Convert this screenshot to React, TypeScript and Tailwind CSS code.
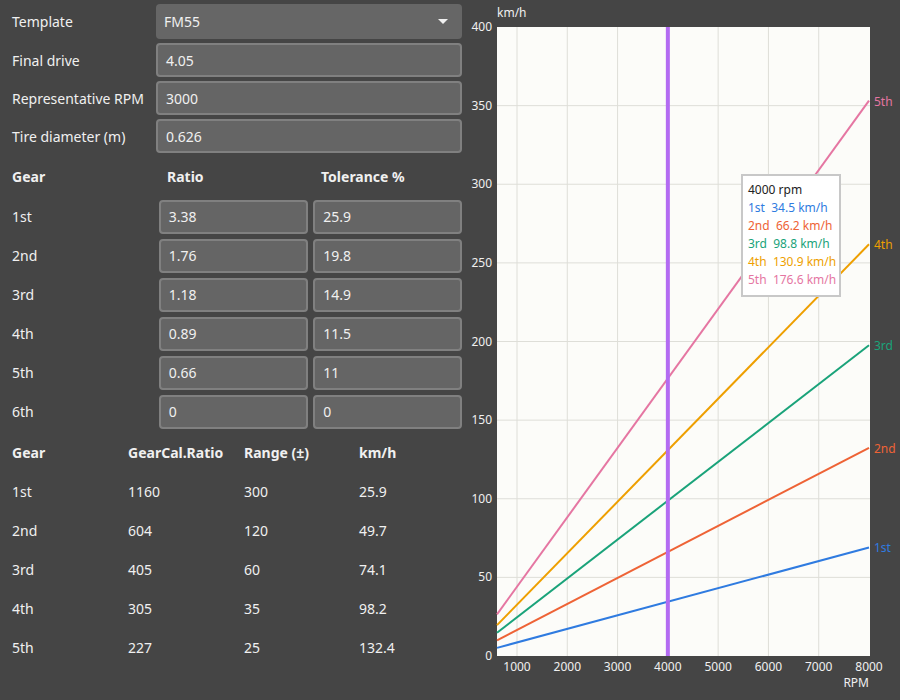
import React from "react";

const gears = [
  ["1st", "3.38", "25.9"],
  ["2nd", "1.76", "19.8"],
  ["3rd", "1.18", "14.9"],
  ["4th", "0.89", "11.5"],
  ["5th", "0.66", "11"],
  ["6th", "0", "0"],
];
const table = [
  ["1st", "1160", "300", "25.9"],
  ["2nd", "604", "120", "49.7"],
  ["3rd", "405", "60", "74.1"],
  ["4th", "305", "35", "98.2"],
  ["5th", "227", "25", "132.4"],
];
const lines = [
  { n: "1st", c: "#2f7be0", v: 34.5 },
  { n: "2nd", c: "#ee6336", v: 66.2 },
  { n: "3rd", c: "#1aa37a", v: 98.8 },
  { n: "4th", c: "#ee9f00", v: 130.9 },
  { n: "5th", c: "#e576a2", v: 176.6 },
];
const X0 = 27, X1 = 400, Y0 = 656, Y1 = 27;
const xr = (r: number) => 47 + ((r - 1000) / 7000) * (399 - 47);
const yv = (v: number) => Y0 - (v / 400) * (Y0 - Y1);

const Input = ({ v, cls }: { v: string; cls: string }) => (
  <div className={`h-[34px] rounded-[4px] border-2 border-[#808080] bg-[#656565] px-[8px] flex items-center text-[14px] text-[#f0f0f0] ${cls}`}>{v}</div>
);

export default function App() {
  return (
    <div className="w-[900px] h-[700px] bg-[#454545] flex text-[#f0f0f0] overflow-hidden" style={{ fontFamily: '"Noto Sans", sans-serif' }}>
      <div className="w-[470px] pl-[12px] pr-[8px] pt-[4px] text-[14px]">
        <div className="flex items-center h-[35px]">
          <div className="w-[144px]">Template</div>
          <div className="flex-1 h-[35px] rounded-[4px] bg-[#666666] px-[8px] flex items-center justify-between">
            <span>FM55</span>
            <svg width="10" height="6" viewBox="0 0 10 6" className="mr-[6px]"><path d="M0 0h10L5 5z" fill="#f0f0f0" /></svg>
          </div>
        </div>
        {[["Final drive", "4.05"], ["Representative RPM", "3000"], ["Tire diameter (m)", "0.626"]].map(([l, v]) => (
          <div key={l} className="flex items-center mt-[4px]">
            <div className="w-[144px]">{l}</div>
            <Input v={v} cls="flex-1" />
          </div>
        ))}
        <div className="flex items-center h-[42px] mt-[2px] font-bold">
          <div className="w-[155px]">Gear</div>
          <div className="w-[154px]">Ratio</div>
          <div>Tolerance %</div>
        </div>
        {gears.map(([g, r, t]) => (
          <div key={g} className="flex items-center h-[39px]">
            <div className="w-[147px]">{g}</div>
            <Input v={r} cls="w-[150px]" />
            <Input v={t} cls="w-[149px] ml-[5px]" />
          </div>
        ))}
        <div className="flex items-center h-[40px] mt-[1px] font-bold">
          <div className="w-[116px]">Gear</div>
          <div className="w-[116px]">GearCal.Ratio</div>
          <div className="w-[115px]">Range (±)</div>
          <div>km/h</div>
        </div>
        {table.map((r) => (
          <div key={r[0]} className="flex items-center h-[39px]">
            <div className="w-[116px]">{r[0]}</div>
            <div className="w-[116px]">{r[1]}</div>
            <div className="w-[115px]">{r[2]}</div>
            <div>{r[3]}</div>
          </div>
        ))}
      </div>
      <div className="relative w-[430px] h-[700px]">
        <svg width="430" height="700" className="absolute left-0 top-0" style={{ fontFamily: '"Noto Sans", sans-serif' }}>
          <text x="27" y="17" fontSize="12" fill="#f0f0f0">km/h</text>
          <rect x={X0} y={Y1} width={X1 - X0} height={Y0 - Y1} fill="#fcfcf9" />
          {[1000, 2000, 3000, 4000, 5000, 6000, 7000].map((r) => (
            <line key={r} x1={xr(r)} x2={xr(r)} y1={Y1} y2={Y0} stroke="#deded8" strokeWidth="1" />
          ))}
          {[50, 100, 150, 200, 250, 300, 350].map((v) => (
            <line key={v} x1={X0} x2={X1} y1={yv(v)} y2={yv(v)} stroke="#deded8" strokeWidth="1" />
          ))}
          {[0, 50, 100, 150, 200, 250, 300, 350, 400].map((v) => (
            <text key={v} x="22" y={yv(v) + 4} fontSize="12" fill="#f0f0f0" textAnchor="end">{v}</text>
          ))}
          {[1000, 2000, 3000, 4000, 5000, 6000, 7000, 8000].map((r) => (
            <text key={r} x={xr(r)} y="671" fontSize="12" fill="#f0f0f0" textAnchor="middle">{r}</text>
          ))}
          <text x="399" y="687" fontSize="12" fill="#f0f0f0" textAnchor="end">RPM</text>
          {lines.map((l) => (
            <g key={l.n}>
              <line x1={X0} y1={yv((l.v / 4000) * 600)} x2={X1 - 1} y2={yv(l.v * 2)} stroke={l.c} strokeWidth="2" />
              <text x="404" y={yv(l.v * 2) + 5} fontSize="12" fill={l.c}>{l.n}</text>
            </g>
          ))}
          <line x1={xr(4000)} x2={xr(4000)} y1={Y1} y2={Y0} stroke="#b36bf2" strokeWidth="4" />
        </svg>
        <div className="absolute left-[271px] top-[174px] w-[100px] h-[123px] bg-white border-2 border-[#c8c8c8] px-[5px] pt-[5px] text-[12px] leading-[18px] whitespace-nowrap">
          <div className="text-[#222]">4000 rpm</div>
          {lines.map((l) => (
            <div key={l.n} style={{ color: l.c }}>{l.n}&nbsp; {l.v.toFixed(1)} km/h</div>
          ))}
        </div>
      </div>
    </div>
  );
}
